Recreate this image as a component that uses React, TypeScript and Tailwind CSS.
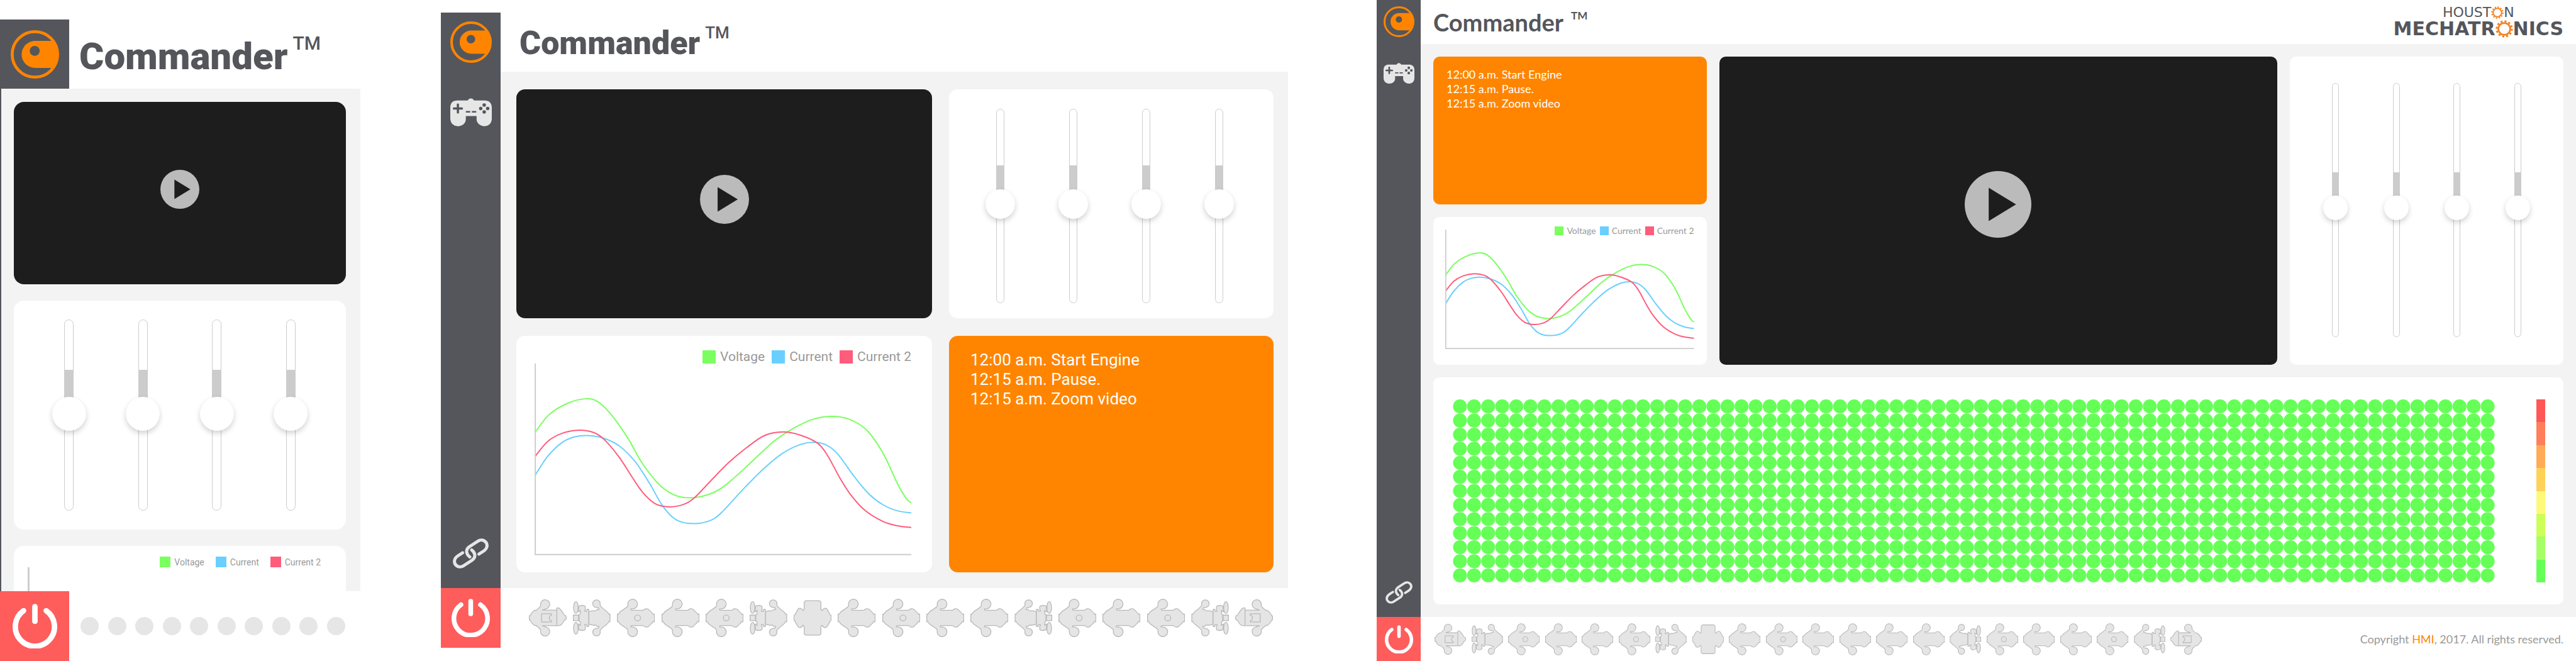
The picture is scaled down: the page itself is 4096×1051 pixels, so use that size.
import React from "react";

type Point = [number, number];

const GREEN: Point[] = [[2, 192], [41, 143], [91, 112], [141, 99], [176, 107], [216, 146], [261, 211], [301, 281], [351, 343], [396, 371], [446, 376], [496, 363], [531, 342], [591, 289], [661, 223], [711, 188], [771, 158], [826, 148], [876, 156], [926, 187], [971, 251], [1011, 336], [1037, 380], [1050, 391]];
const RED: Point[] = [[2, 260], [36, 219], [76, 196], [123, 187], [166, 194], [196, 215], [236, 263], [271, 317], [301, 361], [336, 393], [376, 402], [416, 395], [446, 376], [491, 329], [541, 278], [591, 236], [641, 202], [693, 192], [741, 201], [788, 223], [816, 257], [851, 321], [881, 368], [921, 412], [971, 443], [1011, 455], [1050, 460]];
const BLUE: Point[] = [[2, 313], [36, 261], [76, 222], [111, 206], [148, 202], [191, 209], [236, 231], [281, 276], [321, 337], [358, 401], [396, 439], [444, 449], [493, 439], [526, 413], [581, 353], [641, 293], [691, 252], [741, 227], [781, 221], [816, 230], [846, 255], [891, 317], [931, 365], [971, 396], [1011, 413], [1050, 419]];

function smooth(points: Point[]): string {
  let d = `M${points[0][0]} ${points[0][1]}`;
  for (let i = 0; i < points.length - 1; i++) {
    const p0 = points[Math.max(i - 1, 0)];
    const p1 = points[i];
    const p2 = points[i + 1];
    const p3 = points[Math.min(i + 2, points.length - 1)];
    d += `C${p1[0] + (p2[0] - p0[0]) / 6} ${p1[1] + (p2[1] - p0[1]) / 6} ${p2[0] - (p3[0] - p1[0]) / 6} ${p2[1] - (p3[1] - p1[1]) / 6} ${p2[0]} ${p2[1]}`;
  }
  return d;
}

function Chart({ className, axis = 2, depth = 506 }: { className: string; axis?: number; depth?: number }) {
  return (
    <svg className={className} viewBox={`0 0 1050 ${depth}`} preserveAspectRatio="none" fill="none" role="img" aria-label="Voltage and current over time">
      <g strokeWidth="2">
        <path d={smooth(GREEN)} stroke="#7aff5f" vectorEffect="non-scaling-stroke" />
        <path d={smooth(BLUE)} stroke="#6acfff" vectorEffect="non-scaling-stroke" />
        <path d={smooth(RED)} stroke="#ff5c7c" vectorEffect="non-scaling-stroke" />
      </g>
      <path d={`M2 0V${depth - 2}H1050`} stroke="#cccccc" strokeWidth={axis} vectorEffect="non-scaling-stroke" />
    </svg>
  );
}

function Legend({ className, itemClass, swatchClass }: { className: string; itemClass: string; swatchClass: string }) {
  return (
    <ul className={`flex justify-end text-[#999999] leading-none ${className}`}>
      <li className={`flex items-center ${itemClass}`}><span className={`bg-[#7aff5f] ${swatchClass}`} />Voltage</li>
      <li className={`flex items-center ${itemClass}`}><span className={`bg-[#6acfff] ${swatchClass}`} />Current</li>
      <li className={`flex items-center ${itemClass}`}><span className={`bg-[#ff5c7c] ${swatchClass}`} />Current 2</li>
    </ul>
  );
}

function Brand({ className }: { className: string }) {
  return (
    <svg className={className} viewBox="0 0 131 131" aria-label="Commander logo" role="img">
      <circle cx="65.5" cy="65.5" r="61.5" fill="none" stroke="#ff8500" strokeWidth="8" />
      <path d="M111 29H66A36.5 36.5 0 0 0 66 102H110C121 93 128 80 128 65C128 50 121 37 111 29Z" fill="#ff8500" />
      <circle cx="65" cy="56" r="13.5" fill="#55565b" />
    </svg>
  );
}

function Gamepad({ className }: { className: string }) {
  return (
    <svg className={className} viewBox="0 0 131 88" aria-hidden="true">
      <path d="M0 30C0 14 8 7 22 7H55C59-2 71-2 75 7H108C122 7 131 14 131 30V64C131 78 122 88 108 88C94 88 83 78 83 66V56H49V66C49 80 37 88 24 88C10 88 0 78 0 64Z" fill="#e6e6e6" />
      <g fill="#55565b">
        <rect x="8" y="28.500" width="32" height="7" rx="3" />
        <rect x="20.500" y="16" width="7" height="32" rx="3" />
        <rect x="49" y="40" width="14" height="5" rx="1" />
        <rect x="68" y="40" width="14" height="5" rx="1" />
        <circle cx="107" cy="21" r="5.500" />
        <circle cx="96" cy="32" r="5.500" />
        <circle cx="118" cy="32" r="5.500" />
        <circle cx="107" cy="43" r="5.500" />
      </g>
    </svg>
  );
}

function Chain({ className }: { className: string }) {
  return (
    <svg className={className} viewBox="0 0 114 96" fill="none" stroke="#e6e6e6" strokeWidth="10" strokeLinecap="round" aria-hidden="true">
      <path d="M31 46L17 55C3 64 3 77 9 84C17 93 28 92 36 86L62 69C74 60 72 46 60 37" />
      <path d="M83 50L97 41C111 32 111 19 105 12C97 3 86 4 78 10L52 27C40 36 42 50 54 59" />
    </svg>
  );
}

function Power({ className }: { className: string }) {
  return (
    <svg className={className} viewBox="0 0 122 122" fill="none" stroke="#ffffff" strokeWidth="15" strokeLinecap="round" aria-hidden="true">
      <path d="M30 19A53.500 53.500 0 1 0 92 19" />
      <path d="M61 8V48" />
    </svg>
  );
}

function Video({ className, playClass }: { className: string; playClass: string }) {
  return (
    <div className={`flex items-center justify-center bg-[#1d1d1d] ${className}`}>
      <button type="button" aria-label="Play video" className={playClass}>
        <svg viewBox="0 0 100 100" className="size-full">
          <circle cx="50" cy="50" r="50" fill="#bbbbbb" />
          <path d="M36 25V75L77 50Z" fill="#1d1d1d" />
        </svg>
      </button>
    </div>
  );
}

function Sliders({ className, sliderClass }: { className: string; sliderClass: string }) {
  return (
    <div className={`flex min-h-0 justify-between bg-white ${className}`}>
      {["Channel 1", "Channel 2", "Channel 3", "Channel 4"].map((name) => (
        <input
          key={name}
          type="range"
          aria-label={name}
          defaultValue={51}
          className={`h-full appearance-none rounded-full border border-[#cccccc] [writing-mode:vertical-lr] [direction:rtl] [&::-webkit-slider-thumb]:appearance-none [&::-webkit-slider-thumb]:rounded-full [&::-webkit-slider-thumb]:bg-white [&::-webkit-slider-thumb]:shadow-[0_4px_8px_rgba(0,0,0,0.18)] ${sliderClass}`}
        />
      ))}
    </div>
  );
}

type Kind = "head" | "ladder" | "dot" | "plain" | "cross";

const BODY =
  "M3 114H12C18 100 30 90 45 82L62 70C74 62 84 58 81 46A36 36 0 1 1 120 75H103L107 85H196C204 72 226 70 236 80C240 88 262 100 266 114H278V170H266C262 184 240 196 236 204C226 214 204 212 196 199H107L103 209H120A36 36 0 1 1 81 238C84 226 74 222 62 214L45 202C30 194 18 184 12 170H3Z";

function Robot({ kind, flip, className }: { kind: Kind; flip?: boolean; className: string }) {
  return (
    <svg
      className={`${className} ${flip ? "-scale-x-100" : ""}`}
      viewBox="0 0 280 284"
      fill="#e5e5e5"
      stroke="#b8b8b8"
      strokeWidth="6"
      strokeLinejoin="round"
      aria-hidden="true"
    >
      {(kind === "plain" || kind === "dot") && <path d={BODY} />}
      {kind === "dot" && <circle cx="153" cy="142" r="22" />}
      {kind === "head" && (
        <>
          <path d="M3 126H10C14 112 28 96 42 86H54C66 72 88 62 87 48A34 34 0 1 1 124 75L100 84H207V68H222C232 74 252 104 262 121L272 125C279 133 279 150 272 157L262 160C254 180 238 200 218 200H100L124 209A34 34 0 1 1 87 236C88 222 66 212 54 198H42C28 188 14 172 10 158H3Z" />
          <path d="M207 84V200M94 111H168V120C146 128 146 156 168 164V172H94Z" />
        </>
      )}
      {kind === "ladder" && (
        <>
          <path d="M118 98C130 88 150 88 172 88L178 80H194L190 68L178 64A28 28 0 1 1 201 46C206 62 235 82 252 95C262 102 264 110 266 114H275V170H266C264 174 262 182 252 189C235 202 206 222 201 238A28 28 0 1 1 178 220L190 216L194 204H178L172 196C150 196 130 196 118 186Z" />
          <path d="M117 79H103V92H86L92 80V58C86 46 60 46 42 56C48 72 36 84 42 98L55 86V112L46 118V166L55 172V198L42 186C36 200 48 212 42 228C60 238 86 238 92 226V204L86 192H103V205H117Z" />
          <ellipse cx="22" cy="65" rx="17" ry="44" />
          <ellipse cx="22" cy="219" rx="17" ry="44" />
          <path d="M3 121H42V162H3Z" />
        </>
      )}
      {kind === "cross" && (
        <path d="M78 24L90 14H190L202 24V78L210 88C222 66 244 66 250 80C258 98 266 104 270 118L278 122V162L270 166C266 180 258 186 250 204C244 218 222 218 210 196L202 206V260L190 270H90L78 260V206L70 196C58 218 36 218 30 204C22 186 14 180 10 166L2 162V122L10 118C14 104 22 98 30 80C36 66 58 66 70 88L78 78Z" />
      )}
    </svg>
  );
}

type Unit = { kind: Kind; flip?: boolean };

const TABLET_UNITS: Unit[] = [
  { kind: "head" }, { kind: "ladder" }, { kind: "dot" }, { kind: "plain" }, { kind: "dot" }, { kind: "ladder" },
  { kind: "cross" }, { kind: "plain" }, { kind: "dot" }, { kind: "plain" }, { kind: "plain" }, { kind: "ladder", flip: true },
  { kind: "dot" }, { kind: "plain" }, { kind: "dot" }, { kind: "ladder", flip: true }, { kind: "head", flip: true },
];

const DESKTOP_UNITS: Unit[] = [
  { kind: "head" }, { kind: "ladder" }, { kind: "dot" }, { kind: "plain" }, { kind: "plain" }, { kind: "dot" }, { kind: "ladder" },
  { kind: "cross" }, { kind: "plain" }, { kind: "dot" }, { kind: "plain" }, { kind: "plain" }, { kind: "plain" }, { kind: "plain" },
  { kind: "ladder", flip: true }, { kind: "dot" }, { kind: "plain" }, { kind: "plain" }, { kind: "dot" },
  { kind: "ladder", flip: true }, { kind: "head", flip: true },
];

function Units({ units, className, iconClass }: { units: Unit[]; className: string; iconClass: string }) {
  return (
    <div className={`flex items-center justify-between ${className}`}>
      {units.map((unit, i) => (
        <button key={i} type="button" aria-label={`Unit ${i + 1}`}>
          <Robot kind={unit.kind} flip={unit.flip} className={iconClass} />
        </button>
      ))}
    </div>
  );
}

function Log({ className }: { className: string }) {
  return (
    <div className={`bg-[#ff8500] text-white ${className}`}>
      <p>12:00 a.m. Start Engine</p>
      <p>12:15 a.m. Pause.</p>
      <p>12:15 a.m. Zoom video</p>
    </div>
  );
}

function Gear({ className }: { className: string }) {
  return (
    <svg className={className} viewBox="0 0 40 40" fill="none" stroke="#f58220" aria-hidden="true">
      <circle cx="20" cy="20" r="13.500" strokeWidth="4" />
      <circle cx="20" cy="20" r="17.500" strokeWidth="4" strokeDasharray="4.600 4.563" />
    </svg>
  );
}

const SCALE = ["bg-[#ff5757]", "bg-[#ff7f5a]", "bg-[#ffab57]", "bg-[#ffd157]", "bg-[#fff97a]", "bg-[#ccff57]", "bg-[#a6ff66]", "bg-[#66ff57]"];

function Matrix() {
  const dots: React.ReactNode[] = [];
  for (let row = 0; row < 13; row++) {
    for (let col = 0; col < 74; col++) {
      dots.push(<circle key={`${row}-${col}`} cx={col + 0.5} cy={row + 0.5} r="0.495" />);
    }
  }
  return (
    <svg viewBox="0 0 74 13" className="h-full min-w-0 flex-1" fill="#66ff57" role="img" aria-label="Sensor matrix">
      {dots}
    </svg>
  );
}

function Mobile() {
  return (
    <section className="flex min-h-0 flex-col pt-[31px] font-['Roboto',sans-serif]">
      <header className="flex h-[110px] shrink-0 items-center gap-4">
        <div className="flex size-[110px] items-center justify-center bg-[#55565b]">
          <Brand className="size-[77px]" />
        </div>
        <div className="flex items-start gap-2 pt-2 leading-none text-[#55565b]">
          <h1 className="text-[60px] font-black">Commander</h1>
          <span className="-mt-1.5 text-[30px] font-medium">TM</span>
        </div>
      </header>
      <main className="flex min-h-0 flex-1 flex-col gap-[26px] overflow-hidden border-l-2 border-[#55565b] bg-[#f3f3f3] pt-[21px] pr-[23px] pl-5">
        <Video className="h-[290px] shrink-0 rounded-2xl pb-3" playClass="size-[62px]" />
        <Sliders
          className="h-[364px] shrink-0 rounded-2xl px-20 py-[30px]"
          sliderClass="w-[15px] bg-[linear-gradient(to_bottom,white_26%,#cccccc_26%,#cccccc_50%,white_50%)] [&::-webkit-slider-thumb]:size-[54px]"
        />
        <div className="min-h-0 flex-1 overflow-hidden rounded-t-2xl bg-white pt-[17px] pr-10 pl-[22px]">
          <Legend className="gap-[18px] text-[14px]" itemClass="gap-1.5" swatchClass="size-[17px]" />
          <Chart className="h-[250px] w-full" axis={4} />
        </div>
      </main>
      <footer className="flex h-[111px] shrink-0 items-center">
        <button type="button" aria-label="Power" className="flex h-full w-[110px] items-center justify-center bg-[#ff5c5c]">
          <Power className="size-[71px]" />
        </button>
        <div className="flex flex-1 justify-between pr-6 pl-[18px]">
          {Array.from({ length: 10 }, (_, i) => (
            <button key={i} type="button" aria-label={`Page ${i + 1}`} className="size-[29px] rounded-full bg-[#e6e6e6]" />
          ))}
        </div>
      </footer>
    </section>
  );
}

function Tablet() {
  return (
    <section className="flex min-h-0 pt-5 pb-[21px] font-['Roboto',sans-serif]">
      <nav className="flex w-[95px] shrink-0 flex-col items-center bg-[#55565b] pt-3.5">
        <Brand className="size-[66px]" />
        <button type="button" aria-label="Controls" className="mt-14">
          <Gamepad className="h-[45px] w-[66px]" />
        </button>
        <button type="button" aria-label="Link" className="mt-auto mb-[31px]">
          <Chain className="h-12 w-[57px]" />
        </button>
        <button type="button" aria-label="Power" className="flex h-[95px] w-full items-center justify-center bg-[#ff5c5c]">
          <Power className="size-[61px]" />
        </button>
      </nav>
      <div className="flex min-h-0 min-w-0 flex-1 flex-col">
        <header className="flex h-[94px] shrink-0 items-center pl-[30px]">
          <div className="flex items-start gap-2 pt-1 leading-none text-[#55565b]">
            <h1 className="text-[52px] font-black">Commander</h1>
            <span className="-mt-1 text-[26px] font-medium">TM</span>
          </div>
        </header>
        <main className="grid min-h-0 flex-1 grid-cols-[661fr_516fr] grid-rows-[minmax(0,364fr)_minmax(0,376fr)] gap-x-[27px] gap-y-7 bg-[#f3f3f3] pt-7 pr-[23px] pb-[25px] pl-[25px]">
          <Video className="rounded-[14px] pb-3.5" playClass="size-[78px]" />
          <Sliders
            className="rounded-[14px] pt-[31px] pr-20 pb-6 pl-[75px]"
            sliderClass="w-[13px] bg-[linear-gradient(to_bottom,white_29%,#cccccc_29%,#cccccc_50%,white_50%)] [&::-webkit-slider-thumb]:size-[47px]"
          />
          <div className="flex min-h-0 flex-col rounded-[14px] bg-white pt-[23px] pr-[33px] pb-[27px] pl-[29px]">
            <Legend className="gap-[11px] text-[21px]" itemClass="gap-[7px]" swatchClass="size-[21px]" />
            <Chart className="min-h-0 w-full flex-1" depth={538} />
          </div>
          <Log className="rounded-[14px] px-[34px] pt-[23px] text-[26px] leading-[31px]" />
        </main>
        <footer className="flex h-[95px] shrink-0 items-center">
          <Units units={TABLET_UNITS} className="flex-1 pr-6 pl-[45px]" iconClass="h-[61px] w-[60px]" />
        </footer>
      </div>
    </section>
  );
}

function Desktop() {
  return (
    <section className="flex min-h-0 font-['Lato',sans-serif]">
      <nav className="flex w-[70px] shrink-0 flex-col items-center bg-[#55565b] pt-2.5">
        <Brand className="size-[49px]" />
        <button type="button" aria-label="Controls" className="mt-[41px]">
          <Gamepad className="h-[33px] w-[49px]" />
        </button>
        <button type="button" aria-label="Link" className="mt-auto mb-[21px]">
          <Chain className="h-9 w-[43px]" />
        </button>
        <button type="button" aria-label="Power" className="flex h-[70px] w-full items-center justify-center bg-[#ff5c5c]">
          <Power className="size-[45px]" />
        </button>
      </nav>
      <div className="flex min-h-0 min-w-0 flex-1 flex-col">
        <header className="flex h-[70px] shrink-0 items-center justify-between px-5">
          <div className="flex items-start gap-3 leading-none text-[#55565b]">
            <h1 className="text-[38px] font-bold">Commander</h1>
            <span className="text-[17px] font-bold">TM</span>
          </div>
          <div className="flex flex-col items-center font-['DejaVu_Sans',sans-serif] leading-none text-[#55565b]">
            <div className="flex items-center text-[22px]">
              HOUST<Gear className="size-5" />N
            </div>
            <div className="flex items-center text-[30px] font-bold">
              MECHATR<Gear className="size-7" />NICS
            </div>
          </div>
        </header>
        <main className="grid min-h-0 flex-1 grid-cols-[435fr_889fr_435fr] grid-rows-[minmax(0,490fr)_minmax(0,361fr)] gap-5 bg-[#f3f3f3] p-5">
          <div className="grid min-h-0 grid-rows-2 gap-5">
            <Log className="rounded-[10px] px-[21px] pt-[17px] text-[18px] leading-[23px]" />
            <div className="flex min-h-0 flex-col rounded-[10px] bg-white pt-[15px] pr-5 pb-[25px] pl-[19px]">
              <Legend className="gap-1.5 text-[14px]" itemClass="gap-[5px]" swatchClass="size-3.5" />
              <Chart className="-mt-[9px] min-h-0 w-full flex-1" />
            </div>
          </div>
          <Video className="rounded-[10px] pb-5" playClass="size-[106px]" />
          <Sliders
            className="rounded-[10px] px-[67px] pt-[42px] pb-11"
            sliderClass="w-[11px] bg-[linear-gradient(to_bottom,white_35%,#cccccc_35%,#cccccc_50%,white_50%)] [&::-webkit-slider-thumb]:size-[39px]"
          />
          <div className="col-span-3 flex min-h-0 gap-[66px] rounded-[10px] bg-white py-[35px] pr-[29px] pl-[31px]">
            <Matrix />
            <div className="flex w-3.5 flex-col" role="img" aria-label="Level scale">
              {SCALE.map((color) => (
                <span key={color} className={`flex-1 ${color}`} />
              ))}
            </div>
          </div>
        </main>
        <footer className="flex h-[70px] shrink-0 items-center justify-between pr-5 pl-[22px]">
          <Units units={DESKTOP_UNITS} className="w-[68%]" iconClass="h-[51px] w-[50px]" />
          <p className="text-[18px] text-[#999999]">
            Copyright <a href="#hmi" className="text-[#ff8500]">HMI</a>, 2017. All rights reserved.
          </p>
        </footer>
      </div>
    </section>
  );
}

export default function App() {
  return (
    <div className="grid h-screen grid-cols-[573fr_128fr_1347fr_141fr_1907fr] grid-rows-[minmax(0,1fr)] bg-white">
      <Mobile />
      <div />
      <Tablet />
      <div />
      <Desktop />
    </div>
  );
}
